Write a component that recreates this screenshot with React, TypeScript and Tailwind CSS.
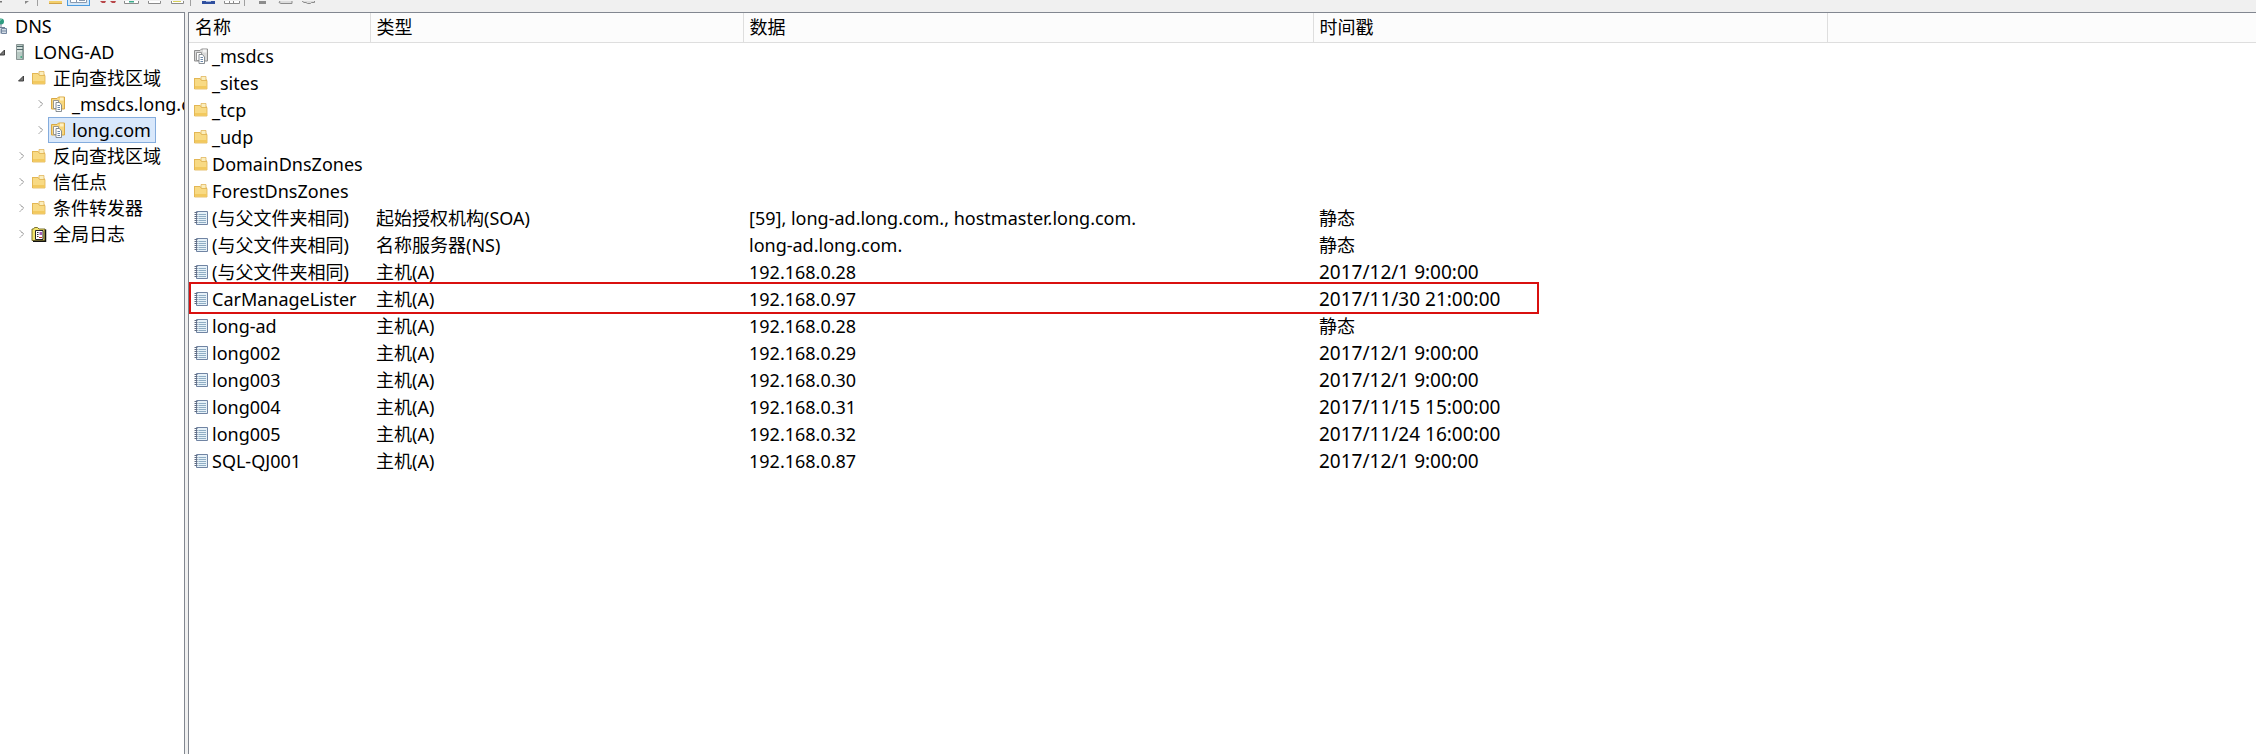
import React, { useState } from 'react';
import { clsx } from 'clsx';

const FolderIcon = () => (
  <svg width="16" height="16" viewBox="0 0 16 16" className="shrink-0">
    <path d="M1 3h6l1 1.500h6V14H1z" fill="#e3b64f" />
    <path d="M8 1.500h5V6H8z" fill="#fbeebd" stroke="#dcae4d" strokeWidth="0.7" />
    <path d="M1.500 3.500H7l1.500 2H14V14H1.500z" fill="#f8da84" stroke="#dfb350" strokeWidth="0.8" />
    <path d="M2 11h12v2.500H2z" fill="#f2c95f" />
  </svg>
);

const ZoneIcon = ({ gray }: { gray?: boolean }) => (
  <svg width="16" height="16" viewBox="0 0 16 16" className="shrink-0">
    <path
      d="M1.500 2.500H7l1.500-1.500h6V13h-13z"
      fill={gray ? '#d9d9d9' : '#f7d77f'}
      stroke={gray ? '#8f8f8f' : '#d8a845'}
    />
    <path d="M10 1.500h3.500v3H10z" fill={gray ? '#f4f4f4' : '#fff1c4'} />
    <path d="M3.500 4.500h5v8h-5z" fill="#fff" stroke="#8c8c8c" strokeWidth="0.9" />
    <path d="M6 6.500h3.500L11.500 9v6.500H6z" fill="#fff" stroke="#7c8288" strokeWidth="0.9" />
    <path d="M7.500 9.500h2.500M7.500 11.500h2.500M7.500 13.500h2.500" stroke="#6b87a8" />
  </svg>
);

const RecordIcon = () => (
  <svg width="16" height="16" viewBox="0 0 16 16" className="shrink-0">
    <path d="M3.500 1.500h11v13h-11z" fill="#e6f1f8" stroke="#7084a3" />
    <path d="M5.500 4.500H13M5.500 6.500H13M5.500 8.500H13M5.500 10.500H13M5.500 12.500H13" stroke="#8fadc4" />
    <path d="M1.500 2.500h3M1.500 4.500h3M1.500 6.500h3M1.500 8.500h3M1.500 10.500h3M1.500 12.500h3" stroke="#5f6a80" />
  </svg>
);

const ServerIcon = () => (
  <svg width="16" height="16" viewBox="0 0 16 16" className="shrink-0">
    <path d="M4.500 0.500h7v15h-7z" fill="#8fa5a0" stroke="#8a9594" />
    <path d="M5 1h5v14H5z" fill="#b8cac4" />
    <path d="M5 2.500h6M5 5.500h6" stroke="#4f6669" />
    <path d="M5 4h5M5 7h5" stroke="#eef4f2" />
    <path d="M8.500 12h1.500v2H8.500z" fill="#4fae87" />
  </svg>
);

const DnsIcon = () => (
  <svg width="16" height="16" viewBox="0 0 16 16" className="shrink-0">
    <circle cx="8" cy="3.500" r="3" fill="#2f9c80" />
    <path d="M6.500 2.500l2-1" stroke="#a7e0cc" />
    <path d="M8 6v3M3 9.500h9M3 9v2M11.500 9v2" stroke="#6f7f96" fill="none" />
    <path d="M8.500 10.500h5v5h-5zM3 10.500h4v5H3z" fill="#d2dbe4" stroke="#7487a0" />
    <path d="M9 13h5M3 13h4" stroke="#7487a0" />
  </svg>
);

const LogIcon = () => (
  <svg width="16" height="16" viewBox="0 0 16 16" className="shrink-0">
    <path d="M1 3h1.500l1-1.500h3L8 3h6v11.500H1z" fill="#f2e36b" stroke="#6d6420" strokeWidth="0.9" />
    <path d="M14.500 3.500v12H2" stroke="#111" strokeWidth="1.500" fill="none" />
    <path d="M4.500 4.500h7.500v9H4.500z" fill="#fff" stroke="#222" />
    <path d="M6 6.500h1.500M6 8.500h1.500M6 10.500h1.500" stroke="#333" />
    <path d="M8.500 6h2.500v3H8.500z" fill="#a35bb5" />
    <path d="M8 11.500h3" stroke="#c0392b" />
  </svg>
);

type IconName = 'dns' | 'server' | 'folder' | 'zone' | 'grayZone' | 'log' | 'record';

const icons: Record<IconName, React.ReactNode> = {
  dns: <DnsIcon />,
  server: <ServerIcon />,
  folder: <FolderIcon />,
  zone: <ZoneIcon />,
  grayZone: <ZoneIcon gray />,
  log: <LogIcon />,
  record: <RecordIcon />,
};

interface TreeNode {
  label: string;
  icon: IconName;
  level: number;
  state?: 'open' | 'closed';
}

const tree: TreeNode[] = [
  { label: 'DNS', icon: 'dns', level: 0 },
  { label: 'LONG-AD', icon: 'server', level: 1, state: 'open' },
  { label: '正向查找区域', icon: 'folder', level: 2, state: 'open' },
  { label: '_msdcs.long.com', icon: 'zone', level: 3, state: 'closed' },
  { label: 'long.com', icon: 'zone', level: 3, state: 'closed' },
  { label: '反向查找区域', icon: 'folder', level: 2, state: 'closed' },
  { label: '信任点', icon: 'folder', level: 2, state: 'closed' },
  { label: '条件转发器', icon: 'folder', level: 2, state: 'closed' },
  { label: '全局日志', icon: 'log', level: 2, state: 'closed' },
];

const indents = ['pl-0', 'pl-[19px]', 'pl-[38px]', 'pl-[57px]'];

interface DnsRecord {
  name: string;
  icon: IconName;
  type?: string;
  data?: string;
  time?: string;
  marked?: boolean;
}

const records: DnsRecord[] = [
  { name: '_msdcs', icon: 'grayZone' },
  { name: '_sites', icon: 'folder' },
  { name: '_tcp', icon: 'folder' },
  { name: '_udp', icon: 'folder' },
  { name: 'DomainDnsZones', icon: 'folder' },
  { name: 'ForestDnsZones', icon: 'folder' },
  { name: '(与父文件夹相同)', icon: 'record', type: '起始授权机构(SOA)', data: '[59], long-ad.long.com., hostmaster.long.com.', time: '静态' },
  { name: '(与父文件夹相同)', icon: 'record', type: '名称服务器(NS)', data: 'long-ad.long.com.', time: '静态' },
  { name: '(与父文件夹相同)', icon: 'record', type: '主机(A)', data: '192.168.0.28', time: '2017/12/1 9:00:00' },
  { name: 'CarManageLister', icon: 'record', type: '主机(A)', data: '192.168.0.97', time: '2017/11/30 21:00:00', marked: true },
  { name: 'long-ad', icon: 'record', type: '主机(A)', data: '192.168.0.28', time: '静态' },
  { name: 'long002', icon: 'record', type: '主机(A)', data: '192.168.0.29', time: '2017/12/1 9:00:00' },
  { name: 'long003', icon: 'record', type: '主机(A)', data: '192.168.0.30', time: '2017/12/1 9:00:00' },
  { name: 'long004', icon: 'record', type: '主机(A)', data: '192.168.0.31', time: '2017/11/15 15:00:00' },
  { name: 'long005', icon: 'record', type: '主机(A)', data: '192.168.0.32', time: '2017/11/24 16:00:00' },
  { name: 'SQL-QJ001', icon: 'record', type: '主机(A)', data: '192.168.0.87', time: '2017/12/1 9:00:00' },
];

const ToolButton = ({ label, active, children }: { label: string; active?: boolean; children: React.ReactNode }) => (
  <button
    type="button"
    aria-label={label}
    className={clsx('h-1.5 w-[23px] shrink-0', active && 'border-x border-b border-[#4a9be0] bg-[#d5e8f8]')}
  >
    <svg width="100%" height="5" viewBox="0 0 23 5" preserveAspectRatio="xMidYMin slice" className="block">
      {children}
    </svg>
  </button>
);

const Separator = () => <span className="mr-1.5 ml-px h-1.5 w-px shrink-0 bg-[#a0a0a0]" />;

const Toolbar = () => (
  <div className="flex h-3 shrink-0 items-start overflow-hidden bg-[#f0f0f0]" role="toolbar">
    <button type="button" aria-label="后退" className="h-1.5 w-[13px] shrink-0">
      <svg width="13" height="5" viewBox="0 0 13 5" className="block">
        <path d="M0 0h2v1.500H0z" fill="#777" />
      </svg>
    </button>
    <ToolButton label="前进">
      <path d="M12 0v3l4-3z" fill="#888" />
    </ToolButton>
    <Separator />
    <ToolButton label="上一级">
      <path d="M5 0h13v3H5z" fill="#f3cf6c" />
      <path d="M5 2.500h13" stroke="#cfa24a" />
    </ToolButton>
    <ToolButton label="显示树" active>
      <path d="M3.500 0v2.500h16V0M9.500 0v3M12 .5h6" stroke="#8a9bb0" fill="#fff" />
    </ToolButton>
    <span className="w-[7px] shrink-0" />
    <ToolButton label="删除">
      <path d="M3 0h6l-1 2H5zM13 0h6l-1 2h-3z" fill="#b8474a" />
    </ToolButton>
    <ToolButton label="刷新">
      <path d="M4.500 0v2.500h14V0" stroke="#8c8c8c" fill="#fff" />
      <path d="M9 0h5v1.500H9z" fill="#3cab8c" />
    </ToolButton>
    <ToolButton label="导出列表">
      <path d="M5.500 0v2.500h12V0" stroke="#8c8c8c" fill="#fff" />
    </ToolButton>
    <ToolButton label="属性">
      <path d="M5.500 0v2.500h12V0" stroke="#8c8c8c" fill="#fff" />
      <path d="M7 .5h8" stroke="#d8d15a" />
    </ToolButton>
    <Separator />
    <ToolButton label="帮助">
      <path d="M5 0h13v3H5z" fill="#2f4f9f" />
      <path d="M9 0h5v1H9z" fill="#9db4e0" />
    </ToolButton>
    <ToolButton label="操作窗格">
      <path d="M4.500 0v2.500h15V0M9.500 0v2M13.500 0v2" stroke="#8c8c8c" fill="#fff" />
    </ToolButton>
    <Separator />
    <ToolButton label="新建服务器">
      <path d="M8 0h7v3H8z" fill="#8c8c8c" />
    </ToolButton>
    <ToolButton label="新建区域">
      <path d="M6 0l-1 1.500 2 1h11V0" stroke="#8c8c8c" fill="#ddd" />
    </ToolButton>
    <ToolButton label="新建记录">
      <path d="M5 0l2 1.500h2l1.500 1h3l1-1h3V0" stroke="#8c8c8c" fill="#ddd" />
    </ToolButton>
  </div>
);

const Expander = ({ state }: { state?: 'open' | 'closed' }) => (
  <svg width="14" height="14" viewBox="0 0 14 14" className="mr-px shrink-0">
    {state === 'open' && <path d="M9.500 5v5h-5z" fill="#777" stroke="#333" strokeWidth="0.9" />}
    {state === 'closed' && (
      <path d="M6 3.500L9.500 7 6 10.500" fill="none" stroke="#555" strokeDasharray="1.500 0.8" />
    )}
  </svg>
);

export default function App() {
  const [selected, setSelected] = useState('long.com');

  return (
    <div className="flex min-h-screen flex-col bg-[#f0f0f0] font-['Noto_Sans','Noto_Sans_CJK_SC',sans-serif] text-[18px] text-black">
      <Toolbar />
      <div className="flex flex-1">
        <nav className="w-[185px] shrink-0 overflow-hidden border-t border-r border-[#828790] bg-white">
          <ul className="-ml-6">
            {tree.map((node) => (
              <li key={node.label} className={clsx('flex h-[26px] items-center', indents[node.level])}>
                <Expander state={node.state} />
                <button
                  type="button"
                  onClick={() => setSelected(node.label)}
                  className={clsx(
                    'flex h-[26px] shrink-0 items-center gap-1.5 border pr-1 pl-px leading-6 whitespace-nowrap',
                    selected === node.label ? 'border-[#84acdd] bg-[#d9e8fb]' : 'border-transparent'
                  )}
                >
                  {icons[node.icon]}
                  {node.label}
                </button>
              </li>
            ))}
          </ul>
        </nav>
        <main className="ml-[3px] flex-1 border-t border-l border-[#828790] bg-white">
          <table className="w-full table-fixed border-collapse text-left">
            <colgroup>
              <col className="w-[181px]" />
              <col className="w-[373px]" />
              <col className="w-[570px]" />
              <col className="w-[514px]" />
              <col />
            </colgroup>
            <thead className="bg-[#fcfcfc]">
              <tr className="h-[29px] border-b border-[#dedede]">
                {['名称', '类型', '数据', '时间戳'].map((title) => (
                  <th key={title} className="border-r border-[#dedede] p-0 pl-1.5 leading-6 font-normal">
                    {title}
                  </th>
                ))}
                <th className="p-0" />
              </tr>
            </thead>
            <tbody>
              {records.map((record, i) => (
                <tr key={i} className="relative h-[27px]">
                  <td className="p-0 pl-1">
                    <div className="flex items-center gap-[3px] leading-6 whitespace-nowrap">
                      {icons[record.icon]}
                      {record.name}
                    </div>
                    {record.marked && (
                      <span className="pointer-events-none absolute -top-[3px] left-0 h-8 w-[1350px] border-2 border-[#d9100f]" />
                    )}
                  </td>
                  <td className="p-0 pl-1.5 leading-6">{record.type}</td>
                  <td className="p-0 pl-1.5 leading-6">{record.data}</td>
                  <td className={clsx('p-0 pl-1.5 leading-6', record.time !== '静态' && 'text-[19px]')}>{record.time}</td>
                  <td className="p-0" />
                </tr>
              ))}
            </tbody>
          </table>
        </main>
      </div>
    </div>
  );
}
